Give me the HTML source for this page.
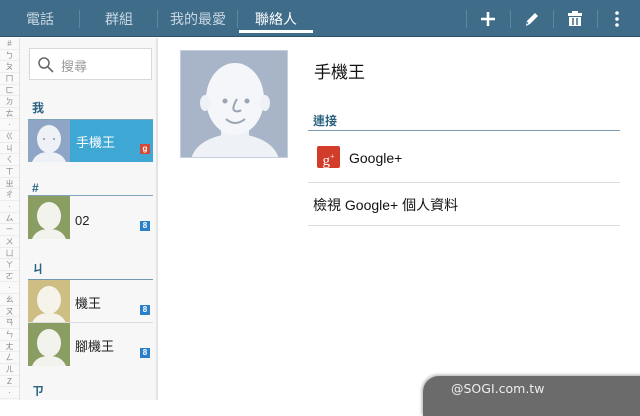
<!DOCTYPE html>
<html><head><meta charset="utf-8"><style>
*{margin:0;padding:0;box-sizing:border-box}
body{width:640px;height:400px;overflow:hidden;background:#fff;font-family:"Liberation Sans","Noto Sans CJK TC",sans-serif;position:relative}
.hdr{position:absolute;left:0;top:0;width:640px;height:37px;background:#3e6c89;border-bottom:1px solid #2c526a}
.tab{position:absolute;top:9px;color:#c9d7e1;font-size:14px}
.sep{position:absolute;top:10px;width:1px;height:18px;background:#5f86a0}
.idx{position:absolute;left:0;top:38px;width:20px;height:362px;background:#f9f9f9;border-right:1px solid #e2e2e2}
.idx div{height:11.65px;font-size:8px;color:#888;text-align:center;line-height:11.65px;border-bottom:1px solid #ececec}
.list{position:absolute;left:20px;top:38px;width:138px;height:362px;background:#f7f7f7;border-right:2px solid #e4e4e4}
.abs{position:absolute}
.sec{position:absolute;left:32px;font-size:12px;font-weight:bold;color:#2b6383}
.row{position:absolute;left:28px;width:125px;height:43px}
.av{position:absolute;left:0;top:0;width:42px;height:43px;overflow:hidden}
.nm{position:absolute;left:48px;top:13px;font-size:13px;color:#222}
.gb{position:absolute;right:3px;bottom:8px;width:10px;height:10px;background:#2a7fc9;color:#fff;font-size:8px;line-height:10px;text-align:center;font-weight:bold}
.line{position:absolute;height:1px;background:#ddd}
</style></head><body>
<div class="hdr">
<span class="tab" style="left:26px">電話</span>
<div class="sep" style="left:79px"></div>
<span class="tab" style="left:105px">群組</span>
<div class="sep" style="left:157px"></div>
<span class="tab" style="left:170px">我的最愛</span>
<div class="sep" style="left:237px"></div>
<span class="tab" style="left:255px;color:#fff">聯絡人</span>
<div class="abs" style="left:239px;top:30px;width:74px;height:3px;background:#fff"></div>
<div class="sep" style="left:466px"></div>
<div class="sep" style="left:510px"></div>
<div class="sep" style="left:553px"></div>
<div class="sep" style="left:597px"></div>
<svg class="abs" style="left:478px;top:9px" width="20" height="20"><path d="M10 3v14M3 10h14" stroke="#fff" stroke-width="2.6"/></svg>
<svg class="abs" style="left:522px;top:9px" width="20" height="20"><path d="M4 17l1-5 8-8 3 3-8 8z" fill="#fff"/><path d="M5 15l1-2" stroke="#3e6c89" stroke-width="1"/></svg>
<svg class="abs" style="left:565px;top:9px" width="20" height="20"><rect x="3" y="4" width="14" height="3" fill="#fff"/><rect x="7" y="2" width="6" height="2" fill="#fff"/><path d="M4 8h12v9H4z" fill="#fff"/><path d="M8 9v7M12 9v7" stroke="#3e6c89" stroke-width="1.5"/></svg>
<svg class="abs" style="left:612px;top:9px" width="10" height="20"><circle cx="5" cy="4" r="1.8" fill="#fff"/><circle cx="5" cy="10" r="1.8" fill="#fff"/><circle cx="5" cy="16" r="1.8" fill="#fff"/></svg>
</div>
<div class="idx">
<div>#</div><div>ㄅ</div><div>ㄆ</div><div>ㄇ</div><div>ㄈ</div><div>ㄉ</div><div>ㄊ</div><div>·</div><div>ㄍ</div><div>ㄐ</div><div>ㄑ</div><div>ㄒ</div><div>ㄓ</div><div>ㄔ</div><div>·</div><div>ㄙ</div><div>ㄧ</div><div>ㄨ</div><div>ㄩ</div><div>ㄚ</div><div>ㄛ</div><div>·</div><div>ㄠ</div><div>ㄡ</div><div>ㄢ</div><div>ㄣ</div><div>ㄤ</div><div>ㄥ</div><div>ㄦ</div><div>Z</div><div>·</div>
</div>
<div class="list"></div>
<div class="abs" style="left:29px;top:48px;width:123px;height:32px;background:#fff;border:1px solid #d8d8d8"></div>
<svg class="abs" style="left:37px;top:56px" width="18" height="18"><circle cx="7" cy="7" r="5" fill="none" stroke="#666" stroke-width="1.5"/><path d="M11 11l5 5" stroke="#666" stroke-width="1.6"/></svg>
<span class="abs" style="left:61px;top:56px;font-size:13px;color:#999">搜尋</span>

<span class="sec" style="top:99px">我</span>
<div class="row" style="top:119px;background:#3ea7d4">
<div class="av" style="background:#8ea5c6"><svg width="42" height="43"><ellipse cx="21" cy="20" rx="12" ry="14" fill="#eef1f5"/><path d="M4 43q4-10 17-10t17 10z" fill="#eef1f5"/><circle cx="16" cy="20" r="1" fill="#8a95a6"/><circle cx="26" cy="20" r="1" fill="#8a95a6"/></svg></div>
<span class="nm" style="color:#fff">手機王</span><div class="gb" style="background:#d34836">g</div></div>
<div class="line" style="left:28px;top:119px;width:125px;background:#7fa3b8"></div>

<span class="sec" style="top:181px">#</span>
<div class="line" style="left:28px;top:195px;width:125px;background:#7fa3b8"></div>
<div class="row" style="top:196px">
<div class="av" style="background:#8a9e63"><svg width="42" height="43"><ellipse cx="21" cy="20" rx="12" ry="14" fill="#f3f3ee"/><path d="M4 43q4-10 17-10t17 10z" fill="#f3f3ee"/></svg></div>
<span class="nm" style="left:47px;top:17px">02</span><div class="gb">8</div></div>

<span class="sec" style="top:260px">ㄐ</span>
<div class="line" style="left:28px;top:279px;width:125px;background:#6f97ad"></div>
<div class="row" style="top:280px">
<div class="av" style="background:#cfbe84"><svg width="42" height="43"><ellipse cx="21" cy="20" rx="12" ry="14" fill="#f5f3ea"/><path d="M4 43q4-10 17-10t17 10z" fill="#f5f3ea"/></svg></div>
<span class="nm" style="left:47px">機王</span><div class="gb">8</div></div>
<div class="line" style="left:28px;top:322px;width:125px"></div>
<div class="row" style="top:323px">
<div class="av" style="background:#8a9e63"><svg width="42" height="43"><ellipse cx="21" cy="20" rx="12" ry="14" fill="#f3f3ee"/><path d="M4 43q4-10 17-10t17 10z" fill="#f3f3ee"/></svg></div>
<span class="nm" style="left:47px">腳機王</span><div class="gb">8</div></div>
<span class="sec" style="top:382px">ㄗ</span>

<div class="abs" style="left:180px;top:50px;width:108px;height:108px;background:#a8b5c8;border:1px solid #c6cfdc;overflow:hidden">
<svg width="108" height="108"><path d="M10 108q6-22 44-26 38 4 44 26z" fill="#eef1f5"/><rect x="40" y="70" width="28" height="18" fill="#eef1f5"/><ellipse cx="54" cy="48" rx="29" ry="36" fill="#f4f6f9"/><ellipse cx="24" cy="52" rx="5" ry="8" fill="#eef1f5"/><ellipse cx="84" cy="52" rx="5" ry="8" fill="#eef1f5"/><circle cx="44" cy="50" r="2.5" fill="#9aa4b4"/><circle cx="66" cy="50" r="2.5" fill="#9aa4b4"/><path d="M56 48q-6 10-2 12 4 1 6-1" fill="none" stroke="#9aa4b4" stroke-width="2"/><path d="M45 68q9 8 19 0" fill="none" stroke="#9aa4b4" stroke-width="2"/></svg></div>

<span class="abs" style="left:314px;top:58px;font-size:17px;color:#111">手機王</span>
<span class="abs" style="left:313px;top:112px;font-size:12px;font-weight:bold;color:#2b6383">連接</span>
<div class="abs" style="left:308px;top:130px;width:312px;height:1px;background:#7d9bb0"></div>
<div class="abs" style="left:317px;top:146px;width:23px;height:22px;background:#d13c2b;border-radius:2px;color:#fff;font-family:'Liberation Serif',serif;font-size:15px;line-height:22px;text-align:center">g<sup style="font-size:8px">+</sup></div>
<span class="abs" style="left:349px;top:150px;font-size:14px;color:#111">Google+</span>
<div class="line" style="left:308px;top:182px;width:312px"></div>
<span class="abs" style="left:313px;top:195px;font-size:14px;color:#111">檢視 Google+ 個人資料</span>
<div class="line" style="left:308px;top:225px;width:312px"></div>

<div class="abs" style="left:423px;top:376px;width:230px;height:40px;background:#6b6b6b;border-radius:16px 0 0 0;box-shadow:-1px -1px 3px #aaa"></div>
<span class="abs" style="left:451px;top:381px;font-family:'DejaVu Sans',sans-serif;font-size:12.5px;color:#eee">@SOGI.com.tw</span>
</body></html>
